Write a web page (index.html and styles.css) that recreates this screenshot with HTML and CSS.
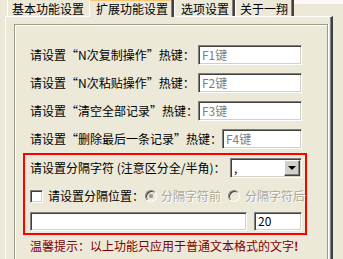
FILE: index.html
```html
<!DOCTYPE html>
<html lang="zh-CN">
	<head>
		<meta charset="utf-8">
		<link rel="stylesheet" href="styles.css">
	</head>
	<body>

		<div class="tabs">
			<div class="tab tab-first">基本功能设置</div>
			<div class="tab tab-on">扩展功能设置</div>
			<div class="tab tab-third">选项设置</div>
			<div class="tab tab-last">关于一翔</div>
			<div class="tabs-rest"></div>
		</div>

		<div class="panel">
			<div class="group">

				<div class="row">
					<span class="label">请设置<q>“</q>N次复制操作<q>”</q>热键：</span>
					<div class="field key">F1键</div>
				</div>
				<div class="row">
					<span class="label">请设置<q>“</q>N次粘贴操作<q>”</q>热键：</span>
					<div class="field key">F2键</div>
				</div>
				<div class="row">
					<span class="label">请设置<q>“</q>清空全部记录<q>”</q>热键：</span>
					<div class="field key">F3键</div>
				</div>
				<div class="row">
					<span class="label label-long">请设置<q>“</q>删除最后一条记录<q>”</q>热键：</span>
					<div class="field key key-short">F4键</div>
				</div>

				<div class="redbox">
					<div class="row-sep">
						<span class="sep-label">请设置分隔字符 (注意区分全/半角)：</span>
						<div class="combo">
							<span class="combo-text">,</span>
							<span class="combo-btn"></span>
						</div>
					</div>
					<div class="row-pos">
						<span class="check"></span>
						<span class="pos-label">请设置分隔位置：</span>
						<span class="radio radio-on"></span>
						<span class="dis dis-first">分隔字符前</span>
						<span class="radio radio-second"></span>
						<span class="dis">分隔字符后</span>
					</div>
					<div class="row-edit">
						<div class="field wide"></div>
						<div class="field num">20</div>
					</div>
				</div>

				<p class="tip">温馨提示：以上功能只应用于普通文本格式的文字<b>!</b></p>

			</div>
		</div>

	</body>
</html>
```

FILE: styles.css
```css
body {
	margin: 0;
	height: 259px;
	overflow: hidden;
	background: #ece9d8;
	color: #000;
	font-family: "Noto Sans CJK SC", sans-serif;
	font-size: 12px;
	line-height: 14px;
}

q {
	quotes: none;
	font-feature-settings: "fwid";
}

/* tab strip */

.tabs {
	display: flex;
	height: 16px;
	padding-left: 7px;
}

.tab {
	box-sizing: border-box;
	height: 16px;
	padding: 2px 4px 0 6px;
	border-left: 1px solid #fff;
	border-right: 2px solid #404040;
	box-shadow: inset -1px 0 #808080;
	white-space: nowrap;
}

.tab-first {
	padding: 2px 5px 0 4px;
	border-right: none;
	box-shadow: none;
}

.tab-on {
	position: relative;
	z-index: 1;
	height: 17px;
	margin-bottom: -1px;
	background: #ece9d8;
	box-shadow: inset -1px 0 #808080, inset 0 1px #f7c66e;
}

.tab-last {
	padding-left: 4px;
}

.tabs-rest {
	flex: 1;
	height: 4px;
	background: #fbfaf6;
}

/* page + group box, both run on below the window */

.panel {
	box-sizing: border-box;
	width: 328px;
	height: 243px;
	margin-left: 5px;
	border-top: 1px solid #fff;
	border-left: 1px solid #fff;
	border-right: 2px solid #404040;
	box-shadow: inset -1px 0 #808080;
	padding-top: 7px;
}

.group {
	box-sizing: border-box;
	width: 314px;
	height: 235px;
	margin-left: 8px;
	padding: 20px 0 0 8px;
	border: 1px solid #9d9a8c;
	border-bottom: none;
	box-shadow: inset 1px 1px #fff, 1px 0 #fff;
}

.row {
	display: flex;
	align-items: center;
	height: 20px;
	padding-left: 7px;
}

.row + .row {
	margin-top: 8px;
}

.label {
	flex: none;
	width: 168px;
	white-space: nowrap;
}

.label-long {
	width: 192px;
}

.field {
	box-sizing: border-box;
	height: 20px;
	padding-left: 3px;
	background: #fff;
	border: 1px solid;
	border-color: #808080 #fff #fff #808080;
	box-shadow: inset 1px 1px #404040, inset -1px -1px #d4d0c8;
	line-height: 17px;
	white-space: nowrap;
}

.key {
	width: 104px;
	color: #808080;
}

.key-short {
	width: 80px;
}

/* red frame */

.redbox {
	box-sizing: border-box;
	width: 284px;
	margin-top: 4px;
	padding: 3px 0 2px 5px;
	border: 2px solid #ff0000;
}

.row-sep {
	display: flex;
	align-items: center;
	height: 20px;
}

.sep-label {
	flex: none;
	width: 200px;
	white-space: nowrap;
}

.combo {
	box-sizing: border-box;
	display: flex;
	justify-content: space-between;
	width: 72px;
	height: 20px;
	padding: 2px 1px 2px 3px;
	background: #fff;
	border: 1px solid;
	border-color: #808080 #fff #fff #808080;
	box-shadow: inset 1px 1px #404040, inset -1px -1px #d4d0c8;
	line-height: 14px;
}

.combo-btn {
	box-sizing: border-box;
	display: flex;
	align-items: center;
	justify-content: center;
	width: 16px;
	height: 16px;
	margin-top: -1px;
	background: #d4d0c8;
	border: 1px solid;
	border-color: #fff #404040 #404040 #fff;
	box-shadow: inset -1px -1px #808080;
}

.combo-btn::after {
	content: "";
	border-top: 4px solid #000;
	border-left: 4px solid transparent;
	border-right: 4px solid transparent;
}

.row-pos {
	display: flex;
	align-items: center;
	height: 16px;
	margin-top: 10px;
}

.check {
	box-sizing: border-box;
	flex: none;
	width: 13px;
	height: 13px;
	margin-right: 5px;
	background: #fff;
	border: 1px solid;
	border-color: #808080 #fff #fff #808080;
	box-shadow: inset 1px 1px #404040, inset -1px -1px #d4d0c8;
}

.pos-label {
	flex: none;
	width: 96px;
	white-space: nowrap;
}

.radio {
	box-sizing: border-box;
	flex: none;
	width: 12px;
	height: 12px;
	margin-left: 1px;
	border-radius: 50%;
	border: 1px solid;
	border-color: #808080 #fff #fff #808080;
	box-shadow: inset 1px 1px #404040;
	background: #ece9d8;
}

.radio-on {
	background: radial-gradient(circle, #a19e95 0 2px, #ece9d8 2.5px);
}

.radio-second {
	margin-left: 7px;
}

.dis {
	margin-left: 5px;
	color: #aca899;
	text-shadow: 1px 1px 0 #fff;
	white-space: nowrap;
}

.dis-first {
	margin-left: 4px;
}

.row-edit {
	display: flex;
	gap: 7px;
	margin-top: 8px;
}

.row-edit .field {
	height: 19px;
	line-height: 16px;
}

.wide {
	width: 217px;
}

.num {
	width: 48px;
}

.tip {
	margin: 4px 0 0 7px;
	color: #800000;
	white-space: nowrap;
}

.tip b {
	color: #a00000;
}
```
